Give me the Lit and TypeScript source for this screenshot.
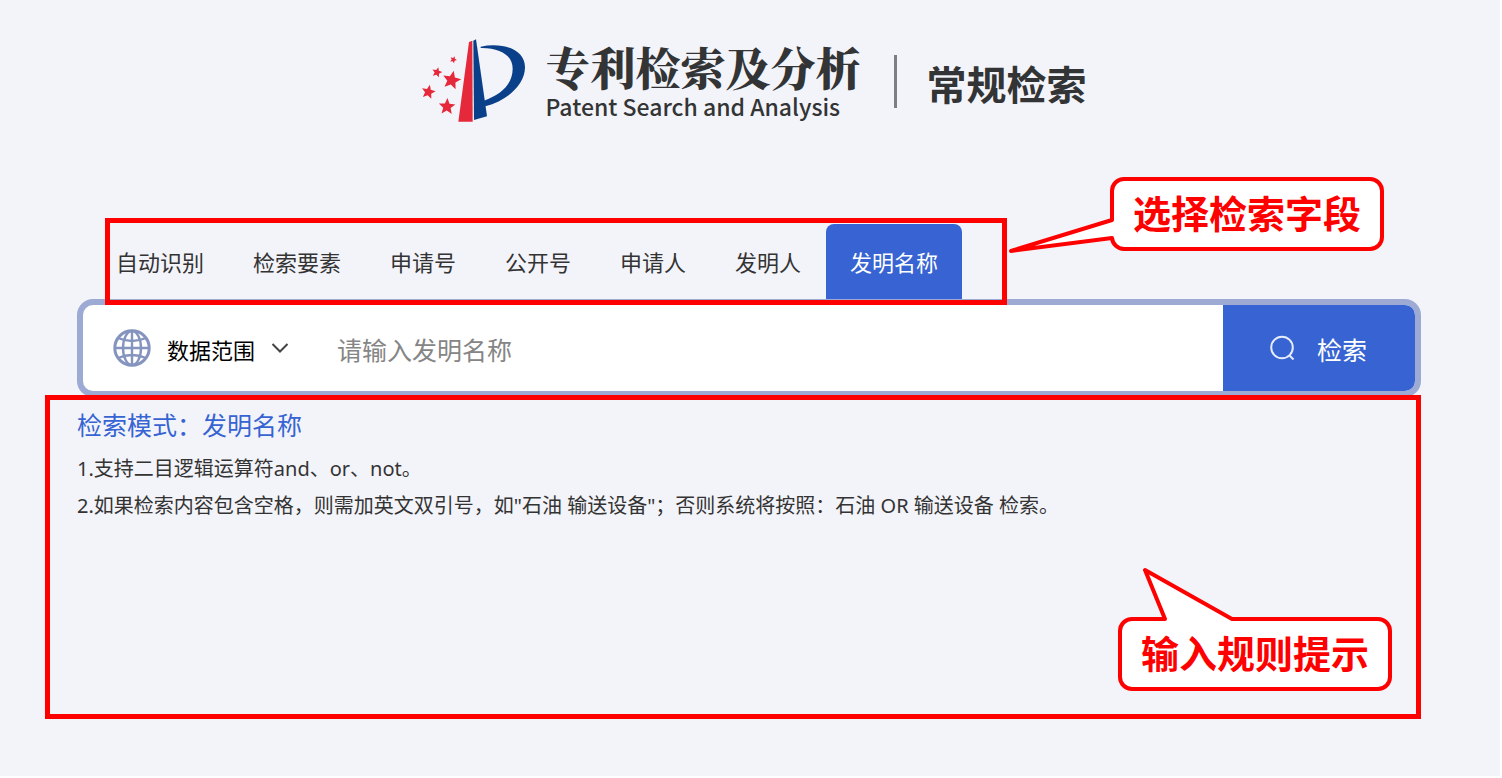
import { LitElement, html, svg, css } from "lit";
import { customElement, property, state } from "lit/decorators.js";
import { classMap } from "lit/directives/class-map.js";

function star(cx: number, cy: number, r: number, tilt: number) {
  const points = Array.from({ length: 10 }, (_, i) => {
    const radius = i % 2 === 0 ? r : r * 0.45;
    const angle = ((i * 36 - 90 + tilt) * Math.PI) / 180;
    return `${(cx + radius * Math.cos(angle)).toFixed(1)},${(cy + radius * Math.sin(angle)).toFixed(1)}`;
  }).join(" ");
  return svg`<polygon points=${points} fill="#e5283a"></polygon>`;
}

@customElement("brand-header")
class BrandHeader extends LitElement {
  static styles = css`
    :host {
      display: flex;
      justify-content: center;
      align-items: flex-start;
      padding: 38px 0 0 8px;
      color: #333436;
    }
    .logo {
      flex: none;
      width: 104px;
      height: 86px;
    }
    .names {
      margin: 0 33px 0 20px;
      padding-top: 8px;
      display: flex;
      flex-direction: column;
      white-space: nowrap;
    }
    .zh {
      font-size: 45px;
      line-height: 50px;
      font-weight: 900;
      font-family: "Liberation Serif", "Noto Serif CJK SC", "Noto Sans CJK SC", serif;
    }
    .en {
      font-family: "Noto Sans CJK SC", sans-serif;
      font-size: 23px;
      line-height: 20px;
      font-weight: 500;
    }
    .divider {
      width: 3px;
      height: 53px;
      margin-top: 17px;
      background: #7d7e82;
    }
    .title {
      margin: 15px 0 0 30px;
      font-size: 40px;
      line-height: 60px;
      font-weight: 700;
      white-space: nowrap;
    }
  `;

  render() {
    return html`
      <svg class="logo" viewBox="33 24 312 258" aria-hidden="true">
        <polygon points="177,36 187,32 188,275 145,275" fill="#e5283a"></polygon>
        <polygon points="190,32 198,28 231,259 192,270" fill="#0a3f8a"></polygon>
        <path
          d="M212 50C275 37 345 55 345 112C345 166 290 212 226 229L222 212C270 194 308 165 308 116C308 76 270 53 212 54Z"
          fill="#0a3f8a"
        ></path>
        ${star(130, 89, 11, 25)} ${star(81, 127, 16, 15)} ${star(125, 151, 29, 12)}
        ${star(55, 186, 22, 12)} ${star(111, 230, 26, 3)}
      </svg>
      <div class="names">
        <span class="zh">专利检索及分析</span>
        <span class="en">Patent Search and Analysis</span>
      </div>
      <div class="divider"></div>
      <h1 class="title">常规检索</h1>
    `;
  }
}

@customElement("note-callout")
class NoteCallout extends LitElement {
  @property() shape = "";

  static styles = css`
    :host {
      display: block;
      position: relative;
      width: 274px;
      height: 74px;
    }
    .outline {
      position: absolute;
      inset: 0;
      width: 100%;
      height: 100%;
      overflow: visible;
    }
    .text {
      position: relative;
      display: block;
      text-align: center;
      color: #ff0000;
      font-size: 38px;
      line-height: 70px;
      font-weight: 700;
      white-space: nowrap;
    }
  `;

  render() {
    return html`
      <svg class="outline" viewBox="0 0 274 74" aria-hidden="true">
        <path d=${this.shape} fill="#fff" stroke="#ff0000" stroke-width="4" stroke-linejoin="round"></path>
      </svg>
      <span class="text"><slot></slot></span>
    `;
  }
}

const FIELD_SHAPE =
  "M14 2H260A12 12 0 0 1 272 14V60A12 12 0 0 1 260 72H14A12 12 0 0 1 2 61L-99 74L2 43V14A12 12 0 0 1 14 2Z";
const RULE_SHAPE =
  "M14 2H47L27 -47L114 2H260A12 12 0 0 1 272 14V60A12 12 0 0 1 260 72H14A12 12 0 0 1 2 60V14A12 12 0 0 1 14 2Z";

@customElement("app-root")
class AppRoot extends LitElement {
  @state() private active = "发明名称";

  private fields = ["自动识别", "检索要素", "申请号", "公开号", "申请人", "发明人", "发明名称"];

  static styles = css`
    :host {
      display: flex;
      box-sizing: border-box;
      min-height: 100vh;
      padding: 0 2px 2px 0;
      background: #fff;
      font-family: "Noto Sans CJK SC", sans-serif;
      color: #333;
    }
    .page {
      flex: 1;
      min-width: 0;
      background: #f3f4f9;
    }
    button,
    input,
    select {
      font: inherit;
      color: inherit;
      border: 0;
      margin: 0;
      background: none;
    }
    .content {
      margin: 0 79px 0 77px;
      padding-top: 100px;
    }
    .tabs {
      position: relative;
      display: flex;
      gap: 1px;
      width: fit-content;
      margin-left: 15px;
    }
    .tab {
      padding: 21px 24px;
      font-size: 22px;
      line-height: 33px;
      border-radius: 8px 8px 0 0;
      white-space: nowrap;
    }
    .tab.active {
      background: #3764d2;
      color: #fff;
    }
    .highlight {
      position: absolute;
      inset: -6px -45px -6px 13px;
      border: 5px solid #ff0000;
      pointer-events: none;
      z-index: 1;
    }
    .field-note {
      position: absolute;
      left: calc(100% + 148px);
      top: -47px;
    }
    .search {
      display: flex;
      border: 6px solid #9daad3;
      border-radius: 16px;
      background: #fff;
      overflow: hidden;
    }
    .scope {
      position: relative;
      display: flex;
      align-items: center;
      padding-left: 30px;
      color: #000;
    }
    .globe {
      width: 38px;
      height: 38px;
    }
    .scope-select {
      appearance: none;
      outline: none;
      font-size: 22px;
      line-height: 33px;
      padding: 2px 33px 0 16px;
    }
    .chevron {
      position: absolute;
      right: 0;
      width: 18px;
      height: 12px;
      pointer-events: none;
    }
    .query {
      flex: 1;
      min-width: 0;
      padding: 2px 0 0 48px;
      outline: none;
      font-size: 25px;
      height: 86px;
      box-sizing: border-box;
    }
    .query::placeholder {
      color: #858585;
      opacity: 1;
    }
    .submit {
      display: flex;
      align-items: center;
      gap: 22px;
      padding: 0 48px 0 46px;
      background: #3764d2;
      color: #fff;
      border-radius: 0 8px 8px 0;
      font-size: 25px;
      line-height: 38px;
    }
    .submit-label {
      padding-top: 2px;
    }
    .magnifier {
      width: 26px;
      height: 26px;
    }
    .hints {
      position: relative;
      margin: -2px 0 0 -32px;
      box-sizing: border-box;
      min-height: 324px;
      border: 5px solid #ff0000;
      padding: 5px 27px;
    }
    .mode {
      margin: 0;
      font-size: 25px;
      line-height: 38px;
      font-weight: 400;
      color: #3764d2;
    }
    .rules {
      margin: 7px 0 0;
      padding: 0;
      list-style: none;
      font-family: "Noto Sans", "Noto Sans CJK SC", sans-serif;
      font-size: 20px;
      line-height: 37px;
    }
    .rule-note {
      position: absolute;
      right: 24px;
      bottom: 23px;
    }
  `;

  render() {
    return html`
      <div class="page">
        <brand-header></brand-header>
        <main class="content">
          <div class="tabs" role="tablist" aria-label="检索字段">
            ${this.fields.map(
              (name) => html`<button
                class=${classMap({ tab: true, active: name === this.active })}
                role="tab"
                aria-selected=${name === this.active}
                @click=${() => (this.active = name)}
              >${name}</button>`
            )}
            <div class="highlight"></div>
            <note-callout class="field-note" .shape=${FIELD_SHAPE}>选择检索字段</note-callout>
          </div>
          <form class="search" @submit=${(e: Event) => e.preventDefault()}>
            <label class="scope">
              <svg class="globe" viewBox="0 0 38 38" fill="none" stroke="#8494bf" stroke-width="2.4" aria-hidden="true">
                <circle cx="19" cy="19" r="17.2" stroke-width="3"></circle>
                <ellipse cx="19" cy="19" rx="9" ry="17"></ellipse>
                <path d="M19 2V36M2 19H36M5 9Q19 15 33 9M5 29Q19 23 33 29"></path>
              </svg>
              <select class="scope-select" aria-label="数据范围">
                <option>数据范围</option>
              </select>
              <svg class="chevron" viewBox="0 0 18 12" fill="none" stroke="#444" stroke-width="2" aria-hidden="true">
                <path d="M1.5 2L9 9.5L16.5 2"></path>
              </svg>
            </label>
            <input class="query" type="text" aria-label="检索内容" placeholder="请输入${this.active}" />
            <button class="submit" type="submit">
              <svg class="magnifier" viewBox="0 0 26 26" fill="none" stroke="#e6ecfb" stroke-width="2" aria-hidden="true">
                <circle cx="13" cy="12.5" r="10.8"></circle>
                <path d="M20 20L24.5 24.5"></path>
              </svg>
              <span class="submit-label">检索</span>
            </button>
          </form>
          <section class="hints">
            <h2 class="mode">检索模式：${this.active}</h2>
            <ol class="rules">
              <li>1.支持二目逻辑运算符and、or、not。</li>
              <li>2.如果检索内容包含空格，则需加英文双引号，如"石油 输送设备"；否则系统将按照：石油 OR 输送设备 检索。</li>
            </ol>
            <note-callout class="rule-note" .shape=${RULE_SHAPE}>输入规则提示</note-callout>
          </section>
        </main>
      </div>
    `;
  }
}
